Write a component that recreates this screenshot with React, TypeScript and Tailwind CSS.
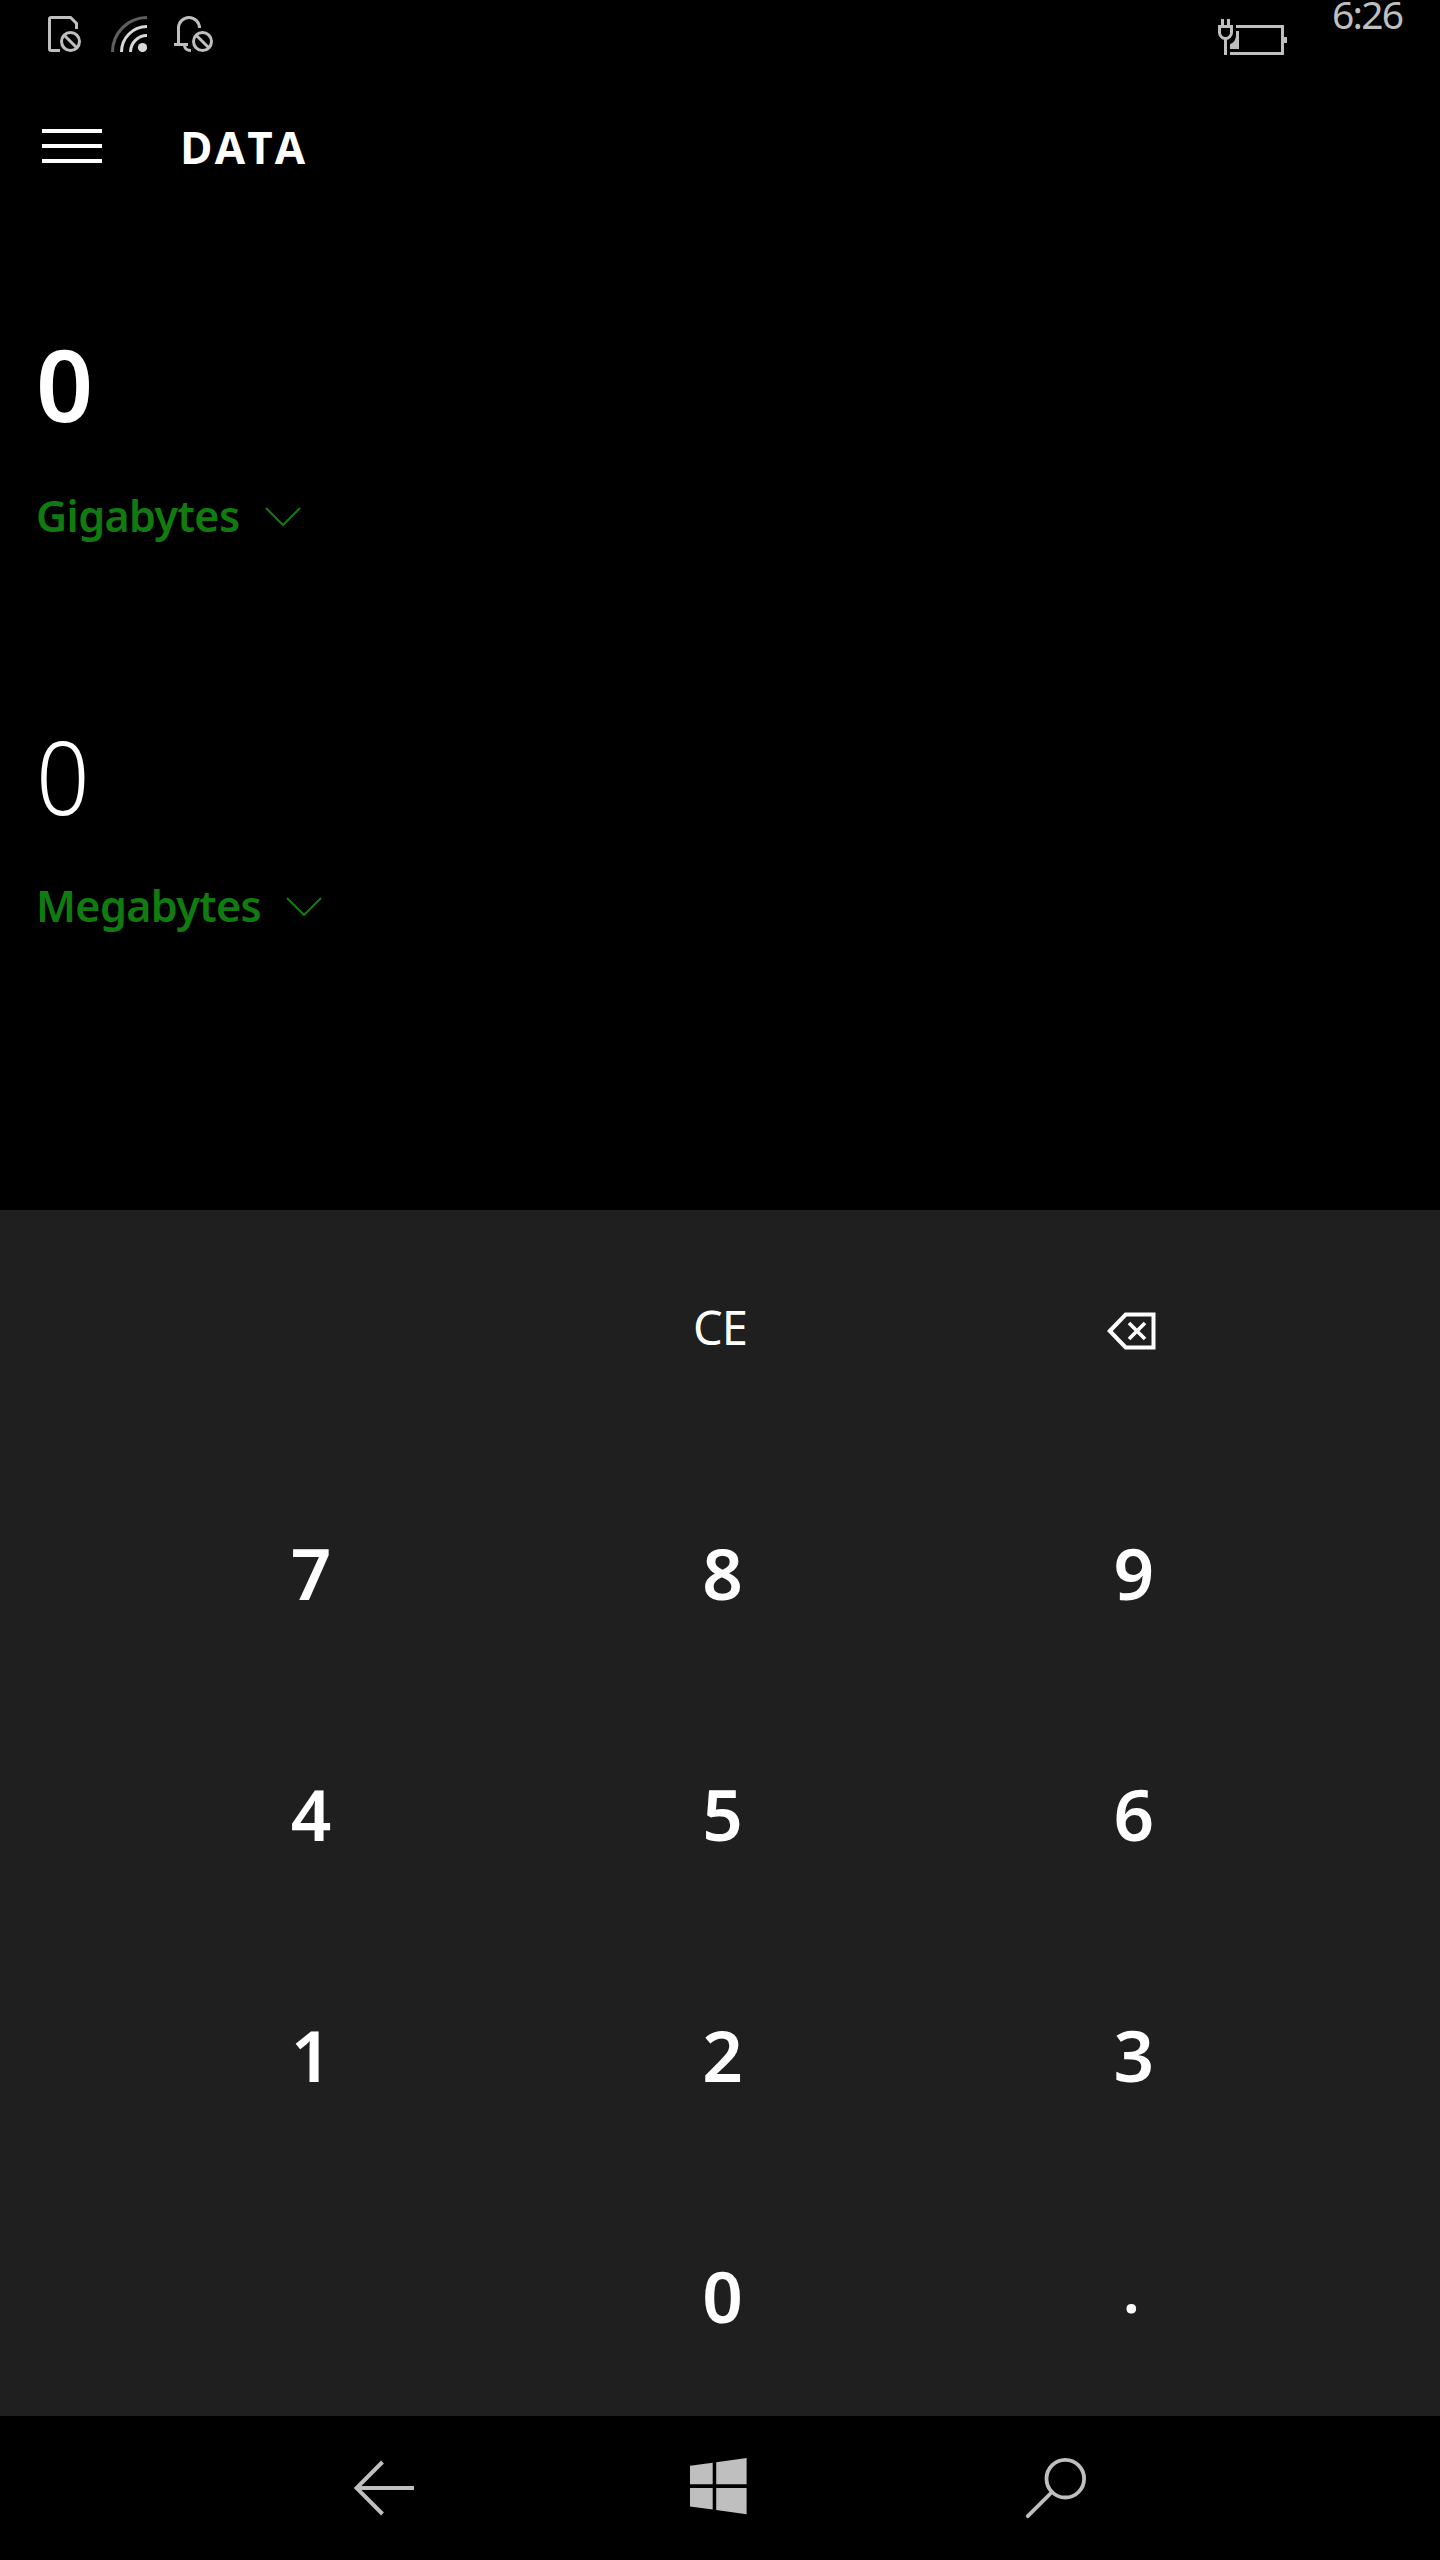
import type { ReactNode } from "react";

function SimBlockedIcon() {
  return (
    <svg className="h-[37px] w-[33px]" viewBox="48 16 33 37" fill="none" stroke="currentColor" strokeWidth="3">
      <path d="M60 50.5H51.2Q49.5 50.5 49.5 48.8V19.2Q49.5 17.5 51.2 17.5H70.6L76.5 23.4V29" />
      <circle cx="70.5" cy="41.5" r="9" />
      <path d="M64.2 35.2L76.8 47.8" />
    </svg>
  );
}

function WifiIcon() {
  return (
    <svg className="h-[36px] w-[36px]" viewBox="111 16 36 36" fill="none" strokeWidth="3">
      <path d="M112.5 52A34.5 34.5 0 0 1 147 17.5" stroke="#5f5f5f" />
      <path d="M121.5 52A25.5 25.5 0 0 1 147 26.5" stroke="#d9d9d9" />
      <path d="M130.5 52A16.5 16.5 0 0 1 147 35.5" stroke="#d9d9d9" />
      <circle cx="142.5" cy="47.5" r="4.6" fill="#d9d9d9" />
    </svg>
  );
}

function BellBlockedIcon() {
  return (
    <svg className="h-[37px] w-[39px]" viewBox="174 16 39 37" fill="none" stroke="currentColor" strokeWidth="3">
      <path d="M178.5 44V28A10.5 10.5 0 0 1 199.5 28" />
      <path d="M174 44.5H188" />
      <path d="M184.5 45.5Q184.8 50.5 191 50.5" />
      <circle cx="202.5" cy="41.5" r="9" />
      <path d="M196.2 35.2L208.8 47.8" />
    </svg>
  );
}

function BatteryChargingIcon() {
  return (
    <svg className="h-[36px] w-[69px]" viewBox="1218 19 69 36" fill="none" stroke="currentColor" strokeWidth="3">
      <path d="M1236 26.5H1282.5V53.5H1230" />
      <path d="M1284 37H1287V43H1284Z" fill="currentColor" stroke="none" />
      <path d="M1236 31H1239V49H1230V44.2Q1236 42 1236 35Z" fill="currentColor" stroke="none" />
      <path d="M1222.5 19V26M1228.5 19V26" />
      <path d="M1219.5 26.5H1231.5V32.5A6 6 0 0 1 1219.5 32.5Z" />
      <path d="M1225.5 39V55" />
    </svg>
  );
}

function ChevronDown() {
  return (
    <svg className="h-[20px] w-[36px]" viewBox="0 0 36 20" fill="none" stroke="currentColor" strokeWidth="2">
      <path d="M1 1L18 18L35 1" />
    </svg>
  );
}

function BackspaceIcon() {
  return (
    <svg className="h-[38px] w-[49px]" viewBox="0 0 49 38" fill="none" stroke="currentColor" strokeWidth="4">
      <path d="M2.8 19L18.7 2.5H46.5V35.5H18.7Z" />
      <path d="M22 11L38 27M38 11L22 27" strokeWidth="3.6" />
    </svg>
  );
}

function Key({ children, className = "" }: { children?: ReactNode; className?: string }) {
  return <button className={`flex items-center justify-center ${className}`}>{children}</button>;
}

const digit = "pl-[5px] pt-[2px] text-[71px] font-semibold";

export default function App() {
  return (
    <div className="flex h-[2560px] w-[1440px] flex-col overflow-hidden bg-black font-['Noto_Sans',sans-serif] text-white">
      <div className="flex h-16 shrink-0 items-start pl-12 pr-9 text-[#bfbfbf]">
        <div className="flex items-start pt-4">
          <SimBlockedIcon />
          <div className="ml-[30px]">
            <WifiIcon />
          </div>
          <div className="ml-[27px]">
            <BellBlockedIcon />
          </div>
        </div>
        <div className="ml-auto pt-[19px]">
          <BatteryChargingIcon />
        </div>
        <div className="ml-[45px] w-[72px] whitespace-nowrap text-[39px] leading-[27px] tracking-[-1.8px]">
          6:26
        </div>
      </div>

      <header className="flex h-[164px] shrink-0 items-center pl-[42px]">
        <button className="flex flex-col gap-[11px]" aria-label="Menu">
          <span className="h-1 w-[60px] bg-white" />
          <span className="h-1 w-[60px] bg-white" />
          <span className="h-1 w-[60px] bg-white" />
        </button>
        <h1 className="ml-[78px] mt-px font-['Open_Sans',sans-serif] text-[44px] font-bold leading-[60px] tracking-[2.1px]">
          DATA
        </h1>
      </header>

      <main className="flex grow flex-col pl-9 pt-[95px]">
        <div className="text-[100px] font-semibold leading-[120px]">0</div>
        <button className="mt-[43px] flex h-[60px] items-center text-[#107c10]">
          <span className="text-[43px] font-semibold leading-[60px] tracking-[-0.6px]">Gigabytes</span>
          <span className="ml-[25px] mt-[2px]">
            <ChevronDown />
          </span>
        </button>
        <div className="mt-[170px] origin-left scale-x-[0.93] text-[101px] font-light leading-[120px]">0</div>
        <button className="mt-[40px] flex h-[60px] items-center text-[#107c10]">
          <span className="text-[43px] font-semibold leading-[60px] tracking-[-0.6px]">Megabytes</span>
          <span className="ml-[25px] mt-[2px]">
            <ChevronDown />
          </span>
        </button>
      </main>

      <section className="h-[1206px] shrink-0 bg-[#1f1f1f]">
        <div className="mx-auto grid h-full w-[1234px] grid-cols-3 grid-rows-5">
          <Key className="col-start-2 pb-[6px] text-[47px] tracking-[-1px]">CE</Key>
          <Key>
            <BackspaceIcon />
          </Key>
          <Key className={digit}>7</Key>
          <Key className={digit}>8</Key>
          <Key className={digit}>9</Key>
          <Key className={digit}>4</Key>
          <Key className={digit}>5</Key>
          <Key className={digit}>6</Key>
          <Key className={digit}>1</Key>
          <Key className={digit}>2</Key>
          <Key className={digit}>3</Key>
          <Key className={`col-start-2 ${digit}`}>0</Key>
          <Key className="pb-[12px] text-[62px] font-semibold">.</Key>
        </div>
      </section>

      <nav className="flex h-36 shrink-0 items-start pl-[354px] text-[#bfbfbf]">
        <svg className="mt-[44px] h-[56px] w-[60px]" viewBox="354 2460 60 56" fill="none" stroke="currentColor" strokeWidth="4">
          <path d="M357 2488H414" />
          <path d="M382.5 2462L356.5 2488L382.5 2514" />
        </svg>
        <svg className="ml-[276px] mt-[41px] h-[58px] w-[57px]" viewBox="690 2457 57 58" fill="currentColor">
          <path d="M690 2465.8L712.7 2462.7V2484.3H690Z" />
          <path d="M716.2 2462.2L746.6 2458V2484.3H716.2Z" />
          <path d="M690 2488H712.7V2509.5L690 2506.5Z" />
          <path d="M716.2 2488H746.6V2514.2L716.2 2510Z" />
        </svg>
        <svg className="ml-[278px] mt-[41px] h-[62px] w-[63px]" viewBox="1025 2457 63 62" fill="none" stroke="currentColor" strokeWidth="3.8">
          <circle cx="1065.3" cy="2478.7" r="18.8" />
          <path d="M1052 2492L1027.8 2516.2" strokeLinecap="round" />
        </svg>
      </nav>
    </div>
  );
}
